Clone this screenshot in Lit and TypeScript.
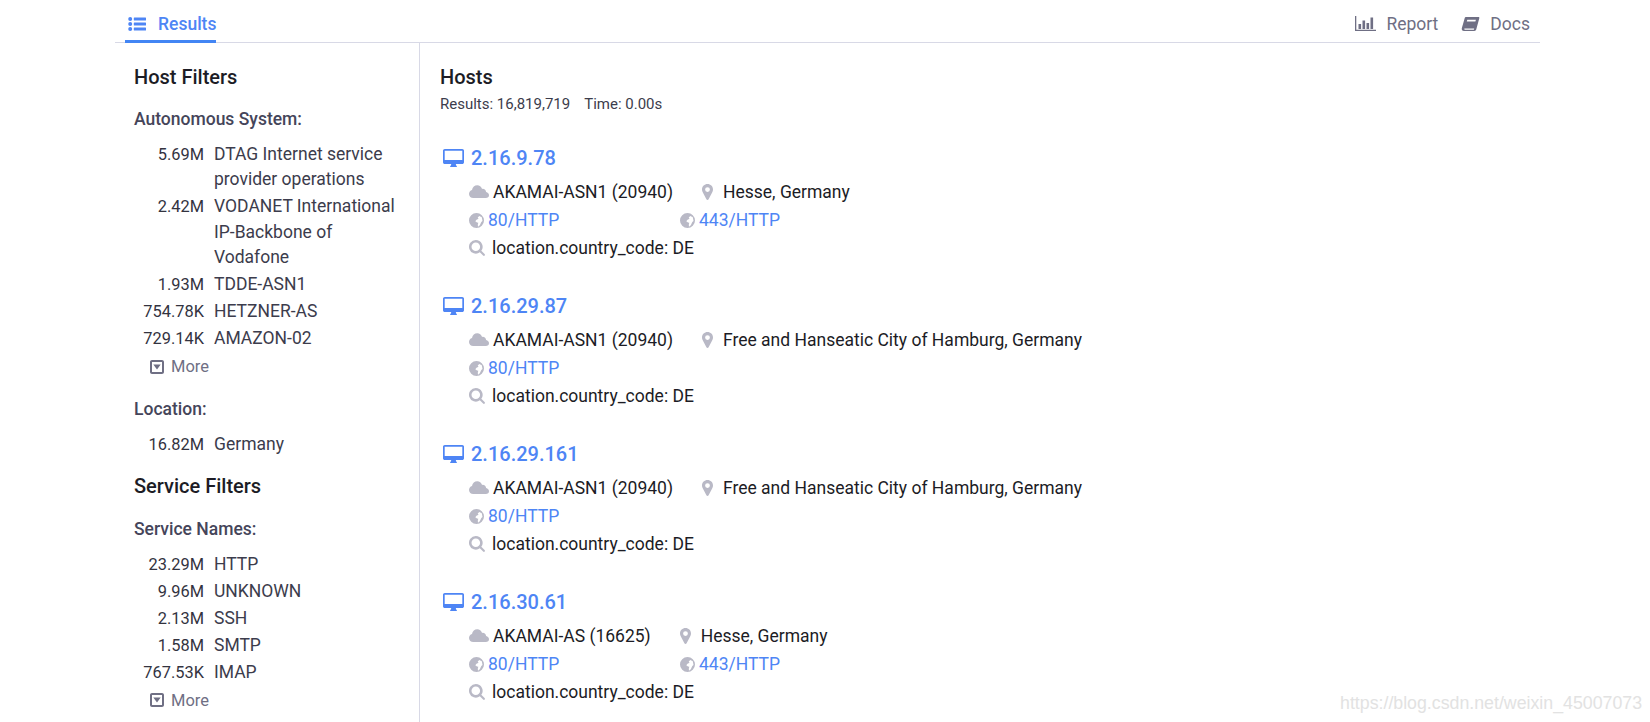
import { LitElement, html, css, svg } from "lit";
import { customElement } from "lit/decorators.js";

const icons = {
  list: svg`<circle cx="2.2" cy="3" r="2"/><circle cx="2.2" cy="8" r="2"/><circle cx="2.2" cy="13" r="2"/><rect x="5.800" y="1.400" width="12.200" height="3.200" rx=".5"/><rect x="5.800" y="6.400" width="12.200" height="3.200" rx=".5"/><rect x="5.800" y="11.400" width="12.200" height="3.200" rx=".5"/>`,
  chart: svg`<path d="M0 0h1.300v13.700H21V15H0z"/><rect x="3.500" y="8" width="2.600" height="5"/><rect x="7.500" y="4.500" width="2.600" height="8.500"/><rect x="11.500" y="7" width="2.600" height="6"/><rect x="15.500" y="1.500" width="2.600" height="11.500"/>`,
  book: svg`<path fill-rule="evenodd" d="M5 1h12.500c.8 0 1 .6.8 1.300l-3 11c-.3 1-.9 1.700-2 1.700H3c-1.600 0-2.600-1.200-2.200-2.800L3.600 2.400C3.800 1.600 4.200 1 5 1zm1.300 2.700-.5 1.700h8.600l.5-1.700zM3.400 12.500c-.2.8.1 1.300.9 1.300h8.500l.4-1.300z"/>`,
  desktop: svg`<path fill-rule="evenodd" d="M1.800 0h17.400C20.200 0 21 .8 21 1.800v11.400c0 1-.8 1.800-1.800 1.800H12.800c0 1 .5 1.800 1.100 2.400v.6H7.100v-.6c.6-.6 1.100-1.400 1.100-2.400H1.800C.8 15 0 14.200 0 13.200V1.800C0 .8.8 0 1.800 0zM1.700 1.700v9.300h17.600V1.700z"/>`,
  cloud: svg`<path d="M4.300 14C1.900 14 0 12.200 0 9.900c0-1.900 1.200-3.500 3-4C3.500 3.300 5.600 1.300 8.200 1.300c2.300 0 4.200 1.500 4.900 3.600 2.200-.3 3.900 1.200 4 3.100 1.700.3 2.900 1.700 2.900 3.200 0 1.700-1.300 2.800-3.200 2.800z"/>`,
  marker: svg`<path fill-rule="evenodd" d="M5.500 0C8.500 0 11 2.400 11 5.400c0 1-.2 1.700-.6 2.500L6.600 15.300c-.4.900-1.800.9-2.200 0L.6 7.900C.2 7.100 0 6.400 0 5.400 0 2.400 2.500 0 5.500 0zm0 3.200a2.400 2.400 0 1 0 0 4.800 2.400 2.400 0 0 0 0-4.800z"/>`,
  globe: svg`<path fill-rule="evenodd" d="M7.500 0a7.500 7.500 0 1 1 0 15 7.500 7.500 0 0 1 0-15zM12.800 4.200 10.300 3 8.700 4.500 9.500 5.800 7.500 6.700 6.300 8.200l1.700 1.200 1.300.3-.5 2 .2 2 1.800-1.400 1.500-3.200 1.200-1.100z"/>`,
  search: svg`<path fill-rule="evenodd" d="M6.800 0a6.800 6.800 0 0 1 5.500 10.800l3.300 3.300c.5.500.5 1.100 0 1.500-.4.500-1 .5-1.500 0l-3.300-3.300A6.800 6.800 0 1 1 6.800 0zm0 2.500a4.300 4.300 0 1 0 0 8.600 4.300 4.300 0 0 0 0-8.600z"/>`,
  caret: svg`<path fill-rule="evenodd" d="M2 0h10c1.100 0 2 .9 2 2v10c0 1.100-.9 2-2 2H2c-1.100 0-2-.9-2-2V2C0 .9.900 0 2 0zm0 2v10h10V2zM3.300 4.500h7.400L7 9.500z"/>`,
};

const asFilters = [
  ["5.69M", "DTAG Internet service provider operations"],
  ["2.42M", "VODANET International IP-Backbone of Vodafone"],
  ["1.93M", "TDDE-ASN1"],
  ["754.78K", "HETZNER-AS"],
  ["729.14K", "AMAZON-02"],
];
const serviceFilters = [
  ["23.29M", "HTTP"],
  ["9.96M", "UNKNOWN"],
  ["2.13M", "SSH"],
  ["1.58M", "SMTP"],
  ["767.53K", "IMAP"],
];
const hosts = [
  { ip: "2.16.9.78", as: "AKAMAI-ASN1 (20940)", place: "Hesse, Germany", ports: ["80/HTTP", "443/HTTP"] },
  { ip: "2.16.29.87", as: "AKAMAI-ASN1 (20940)", place: "Free and Hanseatic City of Hamburg, Germany", ports: ["80/HTTP"] },
  { ip: "2.16.29.161", as: "AKAMAI-ASN1 (20940)", place: "Free and Hanseatic City of Hamburg, Germany", ports: ["80/HTTP"] },
  { ip: "2.16.30.61", as: "AKAMAI-AS (16625)", place: "Hesse, Germany", ports: ["80/HTTP", "443/HTTP"] },
];

@customElement("app-root")
export class AppRoot extends LitElement {
  static styles = css`
    :host {
      display: block;
      position: relative;
      height: 722px;
      overflow: hidden;
      background: #fff;
      font-family: Roboto, "Liberation Sans", sans-serif;
      font-size: 17.5px;
      color: #1c1c25;
    }
    svg {
      display: block;
      fill: currentColor;
      flex: none;
    }
    .page {
      margin: 0 110px 0 115px;
    }
    .nav {
      display: flex;
      justify-content: space-between;
      height: 43px;
      box-sizing: border-box;
      border-bottom: 1px solid #d8d9e6;
    }
    .tab {
      display: flex;
      align-items: center;
      gap: 12px;
      margin-left: 10px;
      padding: 7px 0 0 3px;
      height: 43px;
      box-sizing: border-box;
      border-bottom: 3px solid #4285f4;
      color: #4e85f5;
      font-weight: 500;
    }
    .links {
      display: flex;
      gap: 23px;
      padding-right: 10px;
      color: #6f6f84;
    }
    .link {
      display: flex;
      align-items: center;
      gap: 10px;
      padding-top: 5px;
    }
    .cols {
      display: flex;
    }
    .side {
      width: 305px;
      box-sizing: border-box;
      flex: none;
      height: 679px;
      padding: 22px 15px 0 19px;
      border-right: 1px solid #d8d9e6;
    }
    h2 {
      margin: 0;
      font-size: 20px;
      line-height: 24px;
      font-weight: 500;
      color: #1c1c25;
    }
    h3 {
      margin: 16.5px 0 11px;
      font-size: 17.5px;
      line-height: 24px;
      font-weight: 500;
      color: #45455a;
    }
    h2 + h3 {
      margin-top: 18.5px;
    }
    h2 + h3.first {
      margin-top: 17.5px;
    }
    .filter {
      display: grid;
      grid-template-columns: 70px 1fr;
      gap: 1.5px 10px;
      line-height: 25.5px;
      color: #3c3c4c;
    }
    .count {
      text-align: right;
      font-size: 16.4px;
      color: #33333f;
    }
    .more {
      display: flex;
      align-items: center;
      gap: 7px;
      margin: 1.5px 0 0 16px;
      font-size: 16.5px;
      line-height: 27px;
      color: #6f6f84;
    }
    .side h2.second {
      margin-top: 17px;
    }
    .main {
      padding: 22px 0 0 20px;
    }
    .stats {
      display: flex;
      gap: 14px;
      margin-top: 5px;
      font-size: 15px;
      line-height: 20px;
      color: #3c3c4c;
    }
    .hosts {
      margin-top: 24px;
    }
    .host {
      margin-bottom: 24px;
    }
    .ip {
      display: flex;
      align-items: center;
      gap: 7px;
      margin-left: 3px;
      height: 40px;
      font-size: 20px;
      font-weight: 500;
      color: #4e85f5;
    }
    .line {
      display: flex;
      align-items: center;
      height: 28px;
      margin-left: 29px;
      color: #1c1c25;
    }
    .muted {
      color: #b9b9c6;
    }
    .as {
      margin-left: 4px;
      margin-right: 29px;
    }
    .place {
      margin-left: 10px;
    }
    .port {
      display: flex;
      align-items: center;
      gap: 4px;
      width: 211px;
      color: #4e85f5;
    }
    .query {
      margin-left: 7px;
    }
    .mark {
      position: absolute;
      right: 8px;
      bottom: 8px;
      font-size: 17.75px;
      color: #e2e2e2;
      font-family: "Liberation Sans", sans-serif;
    }
  `;

  private _icon(name: keyof typeof icons, w: number, h: number, cls = "") {
    return html`<svg class=${cls} width=${w} height=${h} viewBox="0 0 ${w} ${h}">${icons[name]}</svg>`;
  }

  private _filters(rows: string[][]) {
    return html`<div class="filter">
        ${rows.map(([n, label]) => html`<span class="count">${n}</span><span>${label}</span>`)}
      </div>
      <div class="more">${this._icon("caret", 14, 14)}More</div>`;
  }

  private _host(h: (typeof hosts)[number]) {
    return html`<div class="host">
      <div class="ip">${this._icon("desktop", 21, 18)}${h.ip}</div>
      <div class="line">
        ${this._icon("cloud", 20, 16, "muted")}
        <span class="as">${h.as}</span>
        ${this._icon("marker", 11, 16, "muted")}
        <span class="place">${h.place}</span>
      </div>
      <div class="line">
        ${h.ports.map((p) => html`<span class="port">${this._icon("globe", 15, 15, "muted")}${p}</span>`)}
      </div>
      <div class="line">
        ${this._icon("search", 16, 16, "muted")}
        <span class="query">location.country_code: DE</span>
      </div>
    </div>`;
  }

  render() {
    return html`<div class="page">
        <div class="nav">
          <div class="tab">${this._icon("list", 18, 16)}Results</div>
          <div class="links">
            <span class="link">${this._icon("chart", 21, 16)}Report</span>
            <span class="link">${this._icon("book", 19, 16)}Docs</span>
          </div>
        </div>
        <div class="cols">
          <aside class="side">
            <h2>Host Filters</h2>
            <h3 class="first">Autonomous System:</h3>
            ${this._filters(asFilters)}
            <h3>Location:</h3>
            <div class="filter"><span class="count">16.82M</span><span>Germany</span></div>
            <h2 class="second">Service Filters</h2>
            <h3>Service Names:</h3>
            ${this._filters(serviceFilters)}
          </aside>
          <main class="main">
            <h2>Hosts</h2>
            <div class="stats"><span>Results: 16,819,719</span><span>Time: 0.00s</span></div>
            <div class="hosts">${hosts.map((h) => this._host(h))}</div>
          </main>
        </div>
      </div>
      <div class="mark">https://blog.csdn.net/weixin_45007073</div>`;
  }
}
